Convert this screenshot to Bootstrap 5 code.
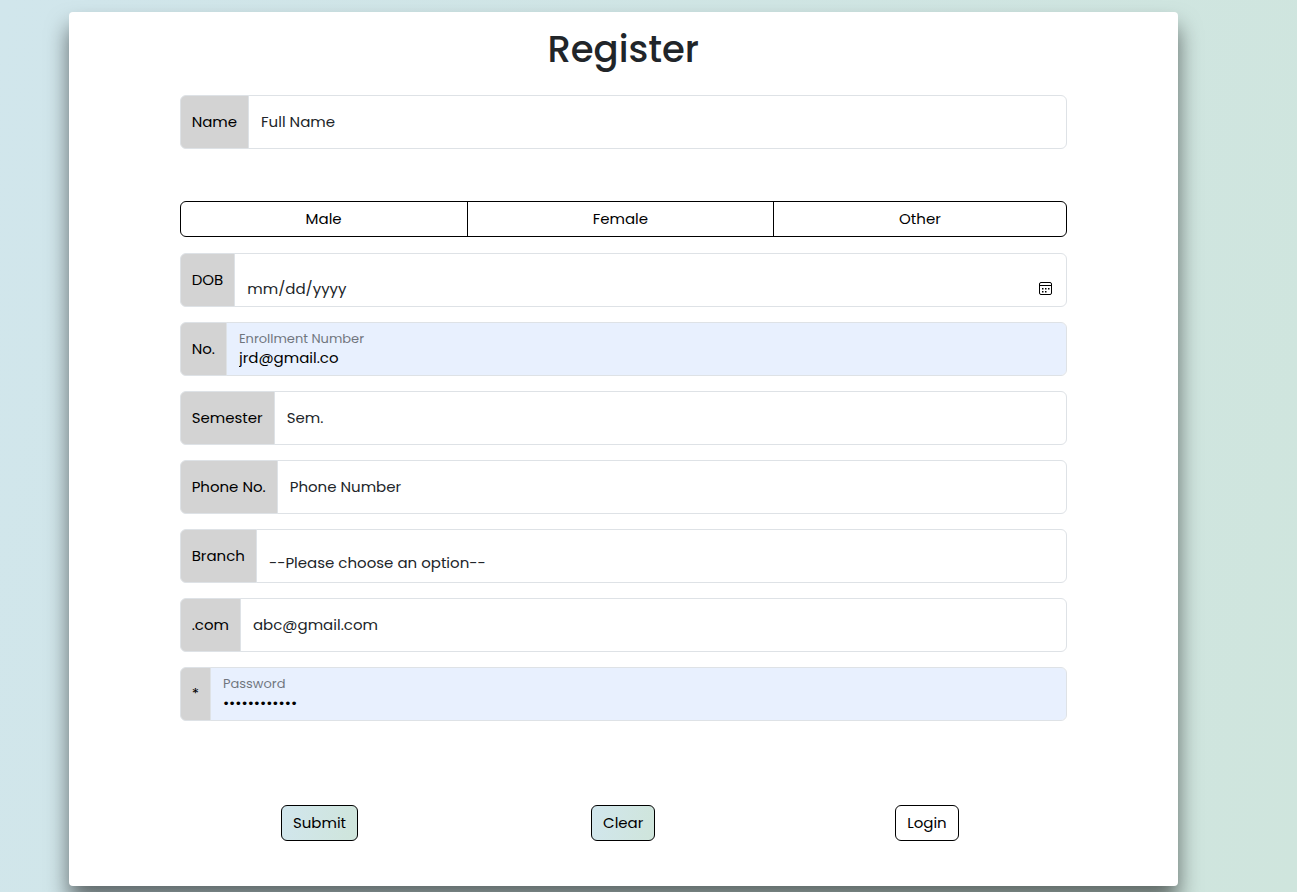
<!DOCTYPE html>
<html lang="en">
<head>
<meta charset="utf-8">
<meta name="viewport" content="width=device-width, initial-scale=1">
<title>Register</title>
<link href="https://cdn.jsdelivr.net/npm/bootstrap@5.3.0/dist/css/bootstrap.min.css" rel="stylesheet">
<style>
  body {
    font-family: Poppins, Inter, sans-serif;
    font-size: 15px;
    background: linear-gradient(100deg, #d1e6ec, #cfe5dd);
    min-height: 100vh;
  }
  .register-panel {
    margin: 12px 9.2% 0 5.3%;
    padding: 17px 8.55% 45px;
    border-radius: 4px;
    box-shadow: 0 15px 22px rgba(0, 0, 0, .55);
  }
  .register-title { font-size: 37px; line-height: 40px; font-weight: 500; margin-bottom: 26px; }
  .register-panel .input-group { margin-bottom: 15px; }
  .input-group-text {
    font-size: 15px;
    padding: 0 11px;
    color: #000;
    background: #d3d3d3;
    border-color: #dee2e6;
  }
  .register-panel .form-control,
  .register-panel .form-select {
    height: 54px;
    min-height: 54px;
    padding: 22px 12px 9px;
    font-size: 15px;
    line-height: 21px;
    border-color: #dee2e6;
    background-image: none;
  }
  .form-floating > label { padding: 14px 12px; line-height: 23px; color: #212529; }
  .register-panel .filled { background-color: #e8f0fe; color: #000; }
  .register-panel .form-floating > .filled ~ label {
    transform: none;
    padding-top: 6px;
    height: auto;
    font-size: 13px;
    line-height: 20px;
    color: #212529;
    opacity: .6;
  }
  .register-panel .form-floating > .filled ~ label::after { display: none; }
  .register-panel input[type="date"] { padding-top: 18px; padding-bottom: 9px; }
  input[type="date"]::-webkit-calendar-picker-indicator {
    width: 15px;
    height: 15px;
    padding: 0;
    margin-right: 1px;
    background: url("data:image/svg+xml,%3Csvg xmlns='http://www.w3.org/2000/svg' viewBox='0 0 15 15'%3E%3Crect x='1.5' y='1.5' width='12' height='12' rx='1.5' fill='none' stroke='%23000'/%3E%3Cpath d='M1.5 4.5h12' stroke='%23000'/%3E%3Cpath d='M4 7h1.5v1.5H4zM7 7h1.5v1.5H7zM10 7h1.5v1.5H10zM4 10h1.5v1.5H4zM7 10h1.5v1.5H7z'/%3E%3C/svg%3E") center / 15px no-repeat;
  }
  .register-panel .btn {
    --bs-btn-font-size: 15px;
    --bs-btn-padding-x: 11px;
    --bs-btn-padding-y: 6px;
    --bs-btn-line-height: 22px;
    --bs-btn-border-color: #000;
    --bs-btn-color: #000;
  }
  .gender-group { margin: 52px 0 16px; }
  .btn-tint { background: linear-gradient(100deg, #d1e6ed, #cfe5db); }
  .action-row { padding-top: 69px; }
</style>
</head>
<body>
<main class="register-panel bg-white">
  <h1 class="register-title text-center">Register</h1>
  <form>
    <div class="input-group">
      <label class="input-group-text" for="name">Name</label>
      <div class="form-floating">
        <input type="text" class="form-control" id="name" placeholder="Full Name">
        <label for="name">Full Name</label>
      </div>
    </div>

    <div class="btn-group gender-group d-flex" role="group" aria-label="Gender">
      <input type="radio" class="btn-check" name="gender" id="male">
      <label class="btn" for="male">Male</label>
      <input type="radio" class="btn-check" name="gender" id="female">
      <label class="btn" for="female">Female</label>
      <input type="radio" class="btn-check" name="gender" id="other">
      <label class="btn" for="other">Other</label>
    </div>

    <div class="input-group">
      <label class="input-group-text" for="dob">DOB</label>
      <div class="form-floating">
        <input type="date" class="form-control" id="dob">
      </div>
    </div>

    <div class="input-group">
      <label class="input-group-text" for="enrol">No.</label>
      <div class="form-floating">
        <input type="text" class="form-control filled" id="enrol" placeholder="Enrollment Number" value="jrd@gmail.co">
        <label for="enrol">Enrollment Number</label>
      </div>
    </div>

    <div class="input-group">
      <label class="input-group-text" for="sem">Semester</label>
      <div class="form-floating">
        <input type="text" class="form-control" id="sem" placeholder="Sem.">
        <label for="sem">Sem.</label>
      </div>
    </div>

    <div class="input-group">
      <label class="input-group-text" for="phone">Phone No.</label>
      <div class="form-floating">
        <input type="tel" class="form-control" id="phone" placeholder="Phone Number">
        <label for="phone">Phone Number</label>
      </div>
    </div>

    <div class="input-group">
      <label class="input-group-text" for="branch">Branch</label>
      <div class="form-floating">
        <select class="form-select" id="branch">
          <option selected>--Please choose an option--</option>
        </select>
      </div>
    </div>

    <div class="input-group">
      <label class="input-group-text" for="email">.com</label>
      <div class="form-floating">
        <input type="email" class="form-control" id="email" placeholder="abc@gmail.com">
        <label for="email">abc@gmail.com</label>
      </div>
    </div>

    <div class="input-group">
      <label class="input-group-text" for="password">*</label>
      <div class="form-floating">
        <input type="password" class="form-control filled" id="password" placeholder="Password" value="abcdefghijkl">
        <label for="password">Password</label>
      </div>
    </div>

    <div class="row text-center action-row">
      <div class="col"><button type="submit" class="btn btn-tint">Submit</button></div>
      <div class="col"><button type="reset" class="btn btn-tint">Clear</button></div>
      <div class="col"><a href="#" class="btn">Login</a></div>
    </div>
  </form>
</main>
<script src="https://cdn.jsdelivr.net/npm/bootstrap@5.3.0/dist/js/bootstrap.bundle.min.js"></script>
</body>
</html>
